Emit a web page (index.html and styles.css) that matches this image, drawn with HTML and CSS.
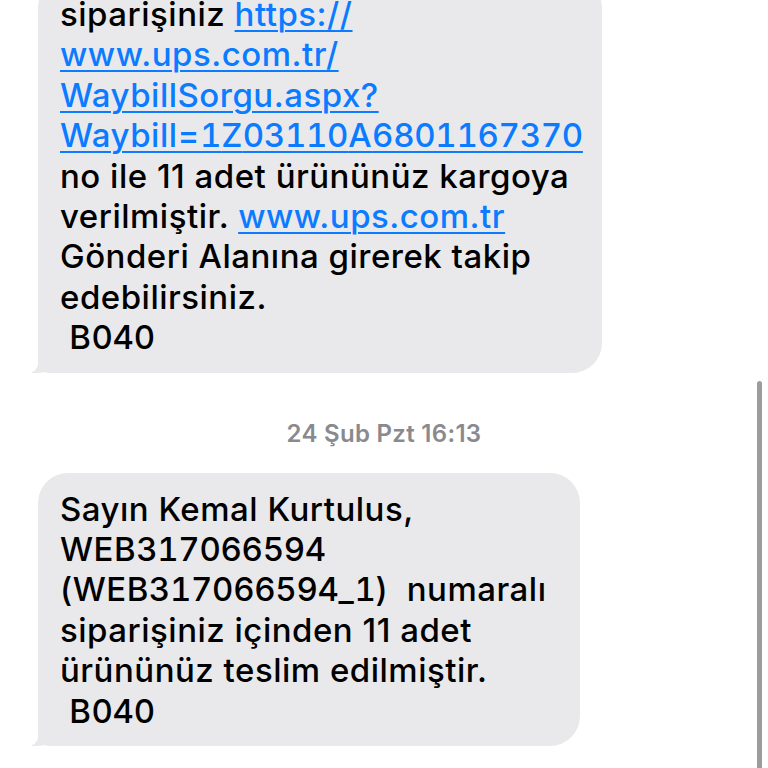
FILE: index.html
```html
<!DOCTYPE html>
<html lang="tr">
<head>
<meta charset="utf-8">
<title>Mesajlar</title>
<link rel="stylesheet" href="styles.css">
</head>
<body>
<div class="chat">
  <div class="bubble bubble-first">siparişiniz <a class="link" href="#">https://<br>www.ups.com.tr/<br>WaybillSorgu.aspx?<br>Waybill=<span class="num">1</span>Z<span class="num">03110</span>A<span class="num">6801167370</span></a><br>no ile 11 adet ürününüz kargoya<br>verilmiştir. <a class="link" href="#">www.ups.com.tr</a><br>Gönderi Alanına girerek takip<br>edebilirsiniz.<br>&nbsp;B<span class="num">040</span></div>
  <div class="stamp">24 Şub Pzt 16:13</div>
  <div class="bubble bubble-second">Sayın Kemal Kurtulus,<br>WEB<span class="num">317066594</span><br>(WEB<span class="num">317066594</span>_<span class="num">1</span>)&nbsp; numaralı<br>siparişiniz içinden 11 adet<br>ürününüz teslim edilmiştir.<br>&nbsp;B<span class="num">040</span></div>
</div>
<div class="scrollbar"></div>
</body>
</html>
```
FILE: styles.css
```css
html, body {
  margin: 0;
  padding: 0;
  background: #ffffff;
  overflow: hidden;
  height: 768px;
}
body {
  font-family: Inter, "Noto Sans", "Liberation Sans", sans-serif;
  color: #000000;
}
.chat {
  display: flex;
  flex-direction: column;
  align-items: flex-start;
  padding-left: 38px;
}
.bubble {
  position: relative;
  box-sizing: border-box;
  background: #e9e9eb;
  border-radius: 30px;
  border-bottom-left-radius: 10px;
  padding: 16px 0 15px 22px;
  font-size: 33px;
  font-weight: 500;
  line-height: 40.4px;
  white-space: nowrap;
  letter-spacing: 0.5px;
}
.num {
  font-feature-settings: "tnum" 1;
  letter-spacing: -0.3px;
}
.bubble::before {
  content: "";
  position: absolute;
  left: -6px;
  bottom: 0;
  width: 22px;
  height: 18px;
  background: #e9e9eb;
  border-bottom-right-radius: 16px 14px;
}
.bubble::after {
  content: "";
  position: absolute;
  left: -20px;
  bottom: 0;
  width: 20px;
  height: 18px;
  background: #ffffff;
  border-bottom-right-radius: 10px 9px;
}
.bubble-first {
  width: 564px;
  margin-top: -22px;
}
.bubble-second {
  width: 542px;
}
.link {
  color: #0b7bff;
  text-decoration: underline;
  text-decoration-thickness: 2px;
  text-underline-offset: 4px;
}
.stamp {
  align-self: center;
  margin: 48px 0 26px -38px;
  font-size: 24px;
  line-height: 26px;
  font-weight: 600;
  letter-spacing: 0.3px;
  color: #8a8a8e;
}
.scrollbar {
  position: absolute;
  left: 757px;
  top: 381px;
  width: 5px;
  height: 400px;
  border-radius: 3px;
  background: #9c9c9e;
}
```
